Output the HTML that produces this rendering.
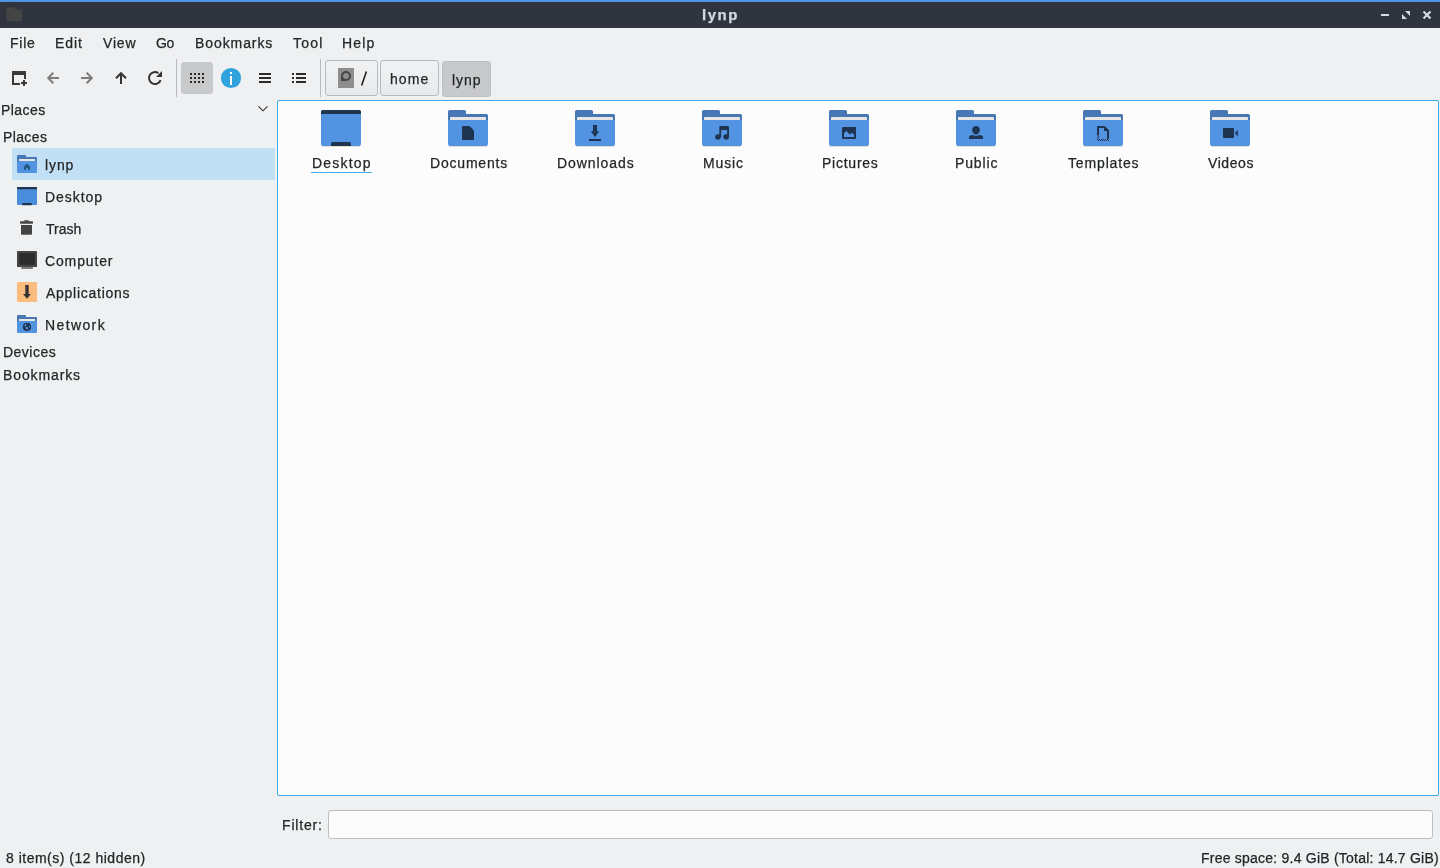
<!DOCTYPE html>
<html><head><meta charset="utf-8">
<style>
*{margin:0;padding:0;box-sizing:border-box}
html,body{width:1440px;height:868px;overflow:hidden;background:#eff0f1;font-family:"Liberation Sans",sans-serif;color:#31363b}
.a{position:absolute}
.t{position:absolute;white-space:nowrap;will-change:transform;-webkit-text-stroke:0.25px currentColor}
svg{position:absolute;overflow:visible}

</style></head><body>
<div class="a" style="left:0;top:0;width:1440px;height:2px;background:#4f92e0"></div>
<div class="a" style="left:0;top:2px;width:1440px;height:26px;background:#2f343f"></div>
<div class="a" style="left:277px;top:100px;width:1162px;height:696px;border:1px solid #3daee9;border-radius:2px;background:#fcfcfc"></div>
<div class="a" style="left:328px;top:810px;width:1105px;height:29px;border:1px solid #bcbebf;border-radius:3px;background:#fcfcfc"></div>
<div class="a" style="left:12px;top:148px;width:263px;height:32px;background:#c2e0f5"></div>
<div class="a" style="left:181px;top:62px;width:32px;height:32px;background:#c8c9cb;border-radius:3px"></div>
<div class="a" style="left:176px;top:59px;width:1px;height:38px;background:#b8babc"></div>
<div class="a" style="left:320px;top:59px;width:1px;height:38px;background:#b8babc"></div>
<div class="a" style="left:325px;top:60px;width:53px;height:36px;border:1px solid #b9babc;border-radius:3px;background:linear-gradient(#f1f2f3,#e8e9ea)"></div>
<div class="a" style="left:380px;top:60px;width:59px;height:36px;border:1px solid #b9babc;border-radius:3px;background:linear-gradient(#f1f2f3,#e8e9ea)"></div>
<div class="a" style="left:442px;top:61px;width:49px;height:36px;border:1px solid #bebfc1;border-radius:3px;background:#c8c9cb"></div>
<div class="a" style="left:311px;top:172px;width:61px;height:1px;background:#3daee9"></div>
<svg width="1440" height="868" style="left:0;top:0" viewBox="0 0 1440 868"><path fill="#444" d="M6.5,8.3 Q6.5,7.3 7.5,7.3 H13.8 L15.4,9.5 H21 Q22,9.5 22,10.5 V20.3 Q22,21.3 21,21.3 H7.5 Q6.5,21.3 6.5,20.3 Z"/><g fill="#d3dae3"><rect x="1381" y="14" width="8" height="2"/><path d="M1405,11 H1410 V16 Z"/><path d="M1402,14 V19 H1407 Z"/></g><path stroke="#d3dae3" stroke-width="2.2" d="M1423.5,11.5 L1430.5,18.5 M1430.5,11.5 L1423.5,18.5"/><g fill="#3a3a3a"><rect x="12" y="71" width="14" height="4"/><rect x="12" y="71" width="2" height="14"/><rect x="24" y="71" width="2" height="8"/><rect x="12" y="83" width="8" height="2"/><rect x="21" y="82" width="6" height="2"/><rect x="23" y="80" width="2" height="6"/></g><path fill="none" stroke="#7c7c7c" stroke-width="2" d="M53.3,72.7 L48.2,78 L53.3,83.3 M48.5,78 H59"/><path fill="none" stroke="#7c7c7c" stroke-width="2" d="M86.7,72.7 L91.8,78 L86.7,83.3 M91.5,78 H81"/><path fill="none" stroke="#333" stroke-width="2" d="M116,78.3 L121,73.2 L126,78.3 M121,73.5 V84"/><path fill="none" stroke="#333" stroke-width="2" d="M160.6,80.2 A6,6 0 1 1 158.4,73.1"/><path fill="#333" d="M162,71 V77 H156 Z"/><rect x="190" y="73" width="2" height="2" fill="#2a2a2a"/><rect x="190" y="77" width="2" height="2" fill="#2a2a2a"/><rect x="190" y="81" width="2" height="2" fill="#2a2a2a"/><rect x="194" y="73" width="2" height="2" fill="#2a2a2a"/><rect x="194" y="77" width="2" height="2" fill="#2a2a2a"/><rect x="194" y="81" width="2" height="2" fill="#2a2a2a"/><rect x="198" y="73" width="2" height="2" fill="#2a2a2a"/><rect x="198" y="77" width="2" height="2" fill="#2a2a2a"/><rect x="198" y="81" width="2" height="2" fill="#2a2a2a"/><rect x="202" y="73" width="2" height="2" fill="#2a2a2a"/><rect x="202" y="77" width="2" height="2" fill="#2a2a2a"/><rect x="202" y="81" width="2" height="2" fill="#2a2a2a"/><circle cx="231" cy="78" r="10.1" fill="#31a3dc"/><rect x="230" y="72" width="2" height="2" fill="#fff"/><rect x="230" y="76" width="2" height="9" fill="#fff"/><g fill="#2b2b2b"><rect x="259" y="73" width="12" height="2"/><rect x="259" y="77" width="12" height="2"/><rect x="259" y="81" width="12" height="2"/><rect x="292" y="73" width="2" height="2"/><rect x="292" y="77" width="2" height="2"/><rect x="292" y="81" width="2" height="2"/><rect x="296" y="73" width="10" height="2"/><rect x="296" y="77" width="10" height="2"/><rect x="296" y="81" width="10" height="2"/></g><rect x="338" y="68" width="16" height="20" fill="#8e8e8e"/><path fill="#454545" d="M341,81 V76 A5,5 0 1 1 346,81 Z"/><circle cx="346" cy="76" r="3" fill="#8e8e8e"/><path stroke="#222" stroke-width="1.6" d="M366.4,71.6 L361.6,85.4"/><path fill="none" stroke="#333" stroke-width="1.15" d="M258.5,106.3 L263,110.8 L267.5,106.3"/><path fill="#4877b5" d="M18,155 H25 Q26,155 26,156 V157 H36 Q37,157 37,158 V163 H17 V156 Q17,155 18,155 Z"/><rect x="19" y="159" width="16" height="2" fill="#e8e6e3"/><path fill="#5294e2" d="M17,161 H37 V172 Q37,173 36,173 H18 Q17,173 17,172 Z"/><path fill="#255a86" d="M27,163.6 L23.2,167 H24 V170 H26.1 V168 H28 V170 H30 V167 H30.8 Z"/><rect x="17" y="187" width="20" height="18" rx="1" fill="#4a8ddc"/><rect x="17" y="187" width="20" height="2.2" rx="0.8" fill="#1e3450"/><rect x="22" y="203" width="10" height="2.2" rx="1" fill="#1e3450"/><g fill="#444"><rect x="20" y="221.3" width="13" height="2.4" rx="0.6"/><rect x="24.2" y="220.3" width="4.7" height="1.5" rx="0.5"/><path d="M21,225 H32 V233.7 Q32,234.7 31,234.7 H22 Q21,234.7 21,233.7 Z"/></g><rect x="17" y="251" width="20" height="16" rx="0.6" fill="#454545"/><rect x="19.2" y="253" width="15.8" height="11.8" fill="#2c2c2c"/><rect x="21.3" y="267" width="11.5" height="2" fill="#7a7a7a"/><rect x="17" y="282" width="20" height="20" rx="1" fill="#fbbd7e"/><path fill="#333" d="M25.3,285 H28.7 V294 H31 L27,298.8 L23,294 H25.3 Z"/><path fill="#4877b5" d="M18,315 H25 Q26,315 26,316 V317 H36 Q37,317 37,318 V323 H17 V316 Q17,315 18,315 Z"/><rect x="19" y="319" width="16" height="2" fill="#e8e6e3"/><path fill="#5294e2" d="M17,321 H37 V332 Q37,333 36,333 H18 Q17,333 17,332 Z"/><circle cx="27" cy="326.9" r="4.1" fill="#1e3450"/><g fill="#5399e4"><ellipse cx="25.5" cy="325.3" rx="0.8" ry="1.3" transform="rotate(30 25.5 325.3)"/><ellipse cx="26.9" cy="328.1" rx="1.1" ry="1.4" transform="rotate(-30 26.9 328.1)"/><ellipse cx="29.4" cy="326.6" rx="0.6" ry="0.9"/></g><rect x="321" y="110" width="40" height="36" rx="2" fill="#5294e2"/><path fill="#1e3450" d="M321,112 Q321,110 323,110 H359 Q361,110 361,112 V114 H321 Z"/><path fill="#1e3450" d="M331,144 Q331,142 333,142 H349 Q351,142 351,144 V146 H331 Z"/><rect x="322" y="146" width="38" height="1" fill="#e5ddd5"/><rect x="449" y="146" width="38" height="1" fill="#e5ddd5"/><rect x="576" y="146" width="38" height="1" fill="#e5ddd5"/><rect x="703" y="146" width="38" height="1" fill="#e5ddd5"/><rect x="830" y="146" width="38" height="1" fill="#e5ddd5"/><rect x="957" y="146" width="38" height="1" fill="#e5ddd5"/><rect x="1084" y="146" width="38" height="1" fill="#e5ddd5"/><rect x="1211" y="146" width="38" height="1" fill="#e5ddd5"/><path fill="#4877b5" d="M449.5,110 H464.5 Q466,110 466,111.5 V114 H486.5 Q488,114 488,115.5 V124 H448 V111.5 Q448,110 449.5,110 Z"/><rect x="450" y="117" width="36" height="3.6" rx="1" fill="#e8e6e3"/><path fill="#5294e2" d="M448,120 H488 V144 Q488,146 486,146 H450 Q448,146 448,144 Z"/><path fill="#4877b5" d="M576.5,110 H591.5 Q593,110 593,111.5 V114 H613.5 Q615,114 615,115.5 V124 H575 V111.5 Q575,110 576.5,110 Z"/><rect x="577" y="117" width="36" height="3.6" rx="1" fill="#e8e6e3"/><path fill="#5294e2" d="M575,120 H615 V144 Q615,146 613,146 H577 Q575,146 575,144 Z"/><path fill="#4877b5" d="M703.5,110 H718.5 Q720,110 720,111.5 V114 H740.5 Q742,114 742,115.5 V124 H702 V111.5 Q702,110 703.5,110 Z"/><rect x="704" y="117" width="36" height="3.6" rx="1" fill="#e8e6e3"/><path fill="#5294e2" d="M702,120 H742 V144 Q742,146 740,146 H704 Q702,146 702,144 Z"/><path fill="#4877b5" d="M830.5,110 H845.5 Q847,110 847,111.5 V114 H867.5 Q869,114 869,115.5 V124 H829 V111.5 Q829,110 830.5,110 Z"/><rect x="831" y="117" width="36" height="3.6" rx="1" fill="#e8e6e3"/><path fill="#5294e2" d="M829,120 H869 V144 Q869,146 867,146 H831 Q829,146 829,144 Z"/><path fill="#4877b5" d="M957.5,110 H972.5 Q974,110 974,111.5 V114 H994.5 Q996,114 996,115.5 V124 H956 V111.5 Q956,110 957.5,110 Z"/><rect x="958" y="117" width="36" height="3.6" rx="1" fill="#e8e6e3"/><path fill="#5294e2" d="M956,120 H996 V144 Q996,146 994,146 H958 Q956,146 956,144 Z"/><path fill="#4877b5" d="M1084.5,110 H1099.5 Q1101,110 1101,111.5 V114 H1121.5 Q1123,114 1123,115.5 V124 H1083 V111.5 Q1083,110 1084.5,110 Z"/><rect x="1085" y="117" width="36" height="3.6" rx="1" fill="#e8e6e3"/><path fill="#5294e2" d="M1083,120 H1123 V144 Q1123,146 1121,146 H1085 Q1083,146 1083,144 Z"/><path fill="#4877b5" d="M1211.5,110 H1226.5 Q1228,110 1228,111.5 V114 H1248.5 Q1250,114 1250,115.5 V124 H1210 V111.5 Q1210,110 1211.5,110 Z"/><rect x="1212" y="117" width="36" height="3.6" rx="1" fill="#e8e6e3"/><path fill="#5294e2" d="M1210,120 H1250 V144 Q1250,146 1248,146 H1212 Q1210,146 1210,144 Z"/><path fill="#1e3450" d="M462,127 Q462,126 463,126 H469.5 L474,130.5 V139 Q474,140 473,140 H463 Q462,140 462,139 Z"/><g fill="#1e3450"><rect x="593" y="125" width="4" height="6.5"/><path d="M590.8,131.3 H599.2 L595,137 Z"/><rect x="589" y="139" width="12" height="2"/></g><g fill="#1e3450"><path d="M719.3,137 V127.3 Q719.3,126 720.6,126 H727.7 Q729,126 729,127.3 V137 H727.1 V130 H721.2 V137 Z"/><circle cx="718" cy="137" r="2.8"/><circle cx="726.1" cy="137" r="2.8"/></g><rect x="842" y="127" width="14" height="12" rx="1" fill="#1e3450"/><path fill="#5294e2" d="M844,137 V133.3 L846.5,131 L849.8,134.4 L852,132.8 L854,134.6 V137 Z"/><g fill="#1e3450"><path d="M976,125.9 C978.3,125.9 979.9,127.7 979.9,129.8 C979.9,132 978,134.6 976,134.6 C974,134.6 972.1,132 972.1,129.8 C972.1,127.7 973.7,125.9 976,125.9 Z"/><path d="M969,139 V136.9 Q969,135.4 972.5,135 Q974.5,135.2 976,136.2 Q977.5,135.2 979.5,135 Q983,135.4 983,136.9 V139 Z"/></g><path fill="none" stroke="#1e3450" stroke-width="2" d="M1098,135.5 V127 H1104.3 L1108,130.7 V139"/><path fill="#1e3450" d="M1104,126 V131 H1109 Z"/><g fill="#1e3450"><rect x="1097" y="139" width="1" height="1"/><rect x="1098" y="140" width="1" height="1"/><rect x="1099" y="139" width="1" height="1"/><rect x="1100" y="140" width="1" height="1"/><rect x="1101" y="139" width="1" height="1"/><rect x="1102" y="140" width="1" height="1"/><rect x="1103" y="139" width="1" height="1"/><rect x="1104" y="140" width="1" height="1"/><rect x="1105" y="139" width="1" height="1"/><rect x="1106" y="140" width="1" height="1"/><rect x="1107" y="139" width="1" height="1"/><rect x="1108" y="140" width="1" height="1"/><rect x="1098" y="136" width="1" height="1"/><rect x="1097" y="137" width="1" height="1"/><rect x="1098" y="138" width="1" height="1"/></g><g fill="#1e3450"><rect x="1223" y="128" width="11" height="10" rx="1"/><path d="M1234.8,133 L1237.8,130 V136.6 Z"/></g></svg>
<div class="t" id="m1" style="left:10.10px;top:35.85px;font-size:14px;line-height:14px;letter-spacing:0.733px;font-weight:400;color:#232627">File</div>
<div class="t" id="m2" style="left:54.50px;top:35.85px;font-size:14px;line-height:14px;letter-spacing:0.917px;font-weight:400;color:#232627">Edit</div>
<div class="t" id="m3" style="left:102.50px;top:35.85px;font-size:14px;line-height:14px;letter-spacing:0.833px;font-weight:400;color:#232627">View</div>
<div class="t" id="m4" style="left:156.00px;top:35.85px;font-size:14px;line-height:14px;letter-spacing:-0.400px;font-weight:400;color:#232627">Go</div>
<div class="t" id="m5" style="left:195.00px;top:35.85px;font-size:14px;line-height:14px;letter-spacing:0.919px;font-weight:400;color:#232627">Bookmarks</div>
<div class="t" id="m6" style="left:292.70px;top:35.85px;font-size:14px;line-height:14px;letter-spacing:1.200px;font-weight:400;color:#232627">Tool</div>
<div class="t" id="m7" style="left:341.70px;top:35.85px;font-size:14px;line-height:14px;letter-spacing:1.200px;font-weight:400;color:#232627">Help</div>
<div class="t" id="ttl" style="left:702.20px;top:7.30px;font-size:15px;line-height:15px;letter-spacing:1.533px;font-weight:700;color:#d3dae3">lynp</div>
<div class="t" id="p2" style="left:389.70px;top:72.45px;font-size:14px;line-height:14px;letter-spacing:1.050px;font-weight:400;color:#232627">home</div>
<div class="t" id="p3" style="left:452.40px;top:73.25px;font-size:14px;line-height:14px;letter-spacing:0.917px;font-weight:400;color:#232627">lynp</div>
<div class="t" id="s0" style="left:0.50px;top:103.15px;font-size:14px;line-height:14px;letter-spacing:0.440px;font-weight:400;color:#232627">Places</div>
<div class="t" id="s1" style="left:2.50px;top:129.95px;font-size:14px;line-height:14px;letter-spacing:0.380px;font-weight:400;color:#232627">Places</div>
<div class="t" id="s2" style="left:44.70px;top:157.65px;font-size:14px;line-height:14px;letter-spacing:0.900px;font-weight:400;color:#232627">lynp</div>
<div class="t" id="s3" style="left:44.70px;top:189.85px;font-size:14px;line-height:14px;letter-spacing:0.967px;font-weight:400;color:#232627">Desktop</div>
<div class="t" id="s4" style="left:45.90px;top:221.95px;font-size:14px;line-height:14px;letter-spacing:0.025px;font-weight:400;color:#232627">Trash</div>
<div class="t" id="s5" style="left:44.70px;top:253.95px;font-size:14px;line-height:14px;letter-spacing:0.857px;font-weight:400;color:#232627">Computer</div>
<div class="t" id="s6" style="left:45.70px;top:285.85px;font-size:14px;line-height:14px;letter-spacing:0.736px;font-weight:400;color:#232627">Applications</div>
<div class="t" id="s7" style="left:44.70px;top:317.95px;font-size:14px;line-height:14px;letter-spacing:1.383px;font-weight:400;color:#232627">Network</div>
<div class="t" id="s8" style="left:2.70px;top:345.35px;font-size:14px;line-height:14px;letter-spacing:0.483px;font-weight:400;color:#232627">Devices</div>
<div class="t" id="s9" style="left:2.70px;top:368.15px;font-size:14px;line-height:14px;letter-spacing:0.888px;font-weight:400;color:#232627">Bookmarks</div>
<div class="t" id="l1" style="left:312.30px;top:155.75px;font-size:14px;line-height:14px;letter-spacing:1.183px;font-weight:400;color:#232627">Desktop</div>
<div class="t" id="l2" style="left:429.90px;top:155.75px;font-size:14px;line-height:14px;letter-spacing:0.800px;font-weight:400;color:#232627">Documents</div>
<div class="t" id="l3" style="left:557.30px;top:155.75px;font-size:14px;line-height:14px;letter-spacing:0.925px;font-weight:400;color:#232627">Downloads</div>
<div class="t" id="l4" style="left:702.90px;top:155.75px;font-size:14px;line-height:14px;letter-spacing:0.875px;font-weight:400;color:#232627">Music</div>
<div class="t" id="l5" style="left:821.90px;top:155.75px;font-size:14px;line-height:14px;letter-spacing:0.757px;font-weight:400;color:#232627">Pictures</div>
<div class="t" id="l6" style="left:955.30px;top:155.75px;font-size:14px;line-height:14px;letter-spacing:0.860px;font-weight:400;color:#232627">Public</div>
<div class="t" id="l7" style="left:1068.30px;top:155.75px;font-size:14px;line-height:14px;letter-spacing:0.850px;font-weight:400;color:#232627">Templates</div>
<div class="t" id="l8" style="left:1208.30px;top:155.75px;font-size:14px;line-height:14px;letter-spacing:0.580px;font-weight:400;color:#232627">Videos</div>
<div class="t" id="f1" style="left:281.90px;top:818.15px;font-size:14px;line-height:14px;letter-spacing:0.833px;font-weight:400;color:#232627">Filter:</div>
<div class="t" id="st1" style="left:6.30px;top:850.95px;font-size:14px;line-height:14px;letter-spacing:0.500px;font-weight:400;color:#232627">8 item(s) (12 hidden)</div>
<div class="t" id="st2" style="left:1201.10px;top:851.05px;font-size:14px;line-height:14px;letter-spacing:0.225px;font-weight:400;color:#232627">Free space: 9.4 GiB (Total: 14.7 GiB)</div>
</body></html>
